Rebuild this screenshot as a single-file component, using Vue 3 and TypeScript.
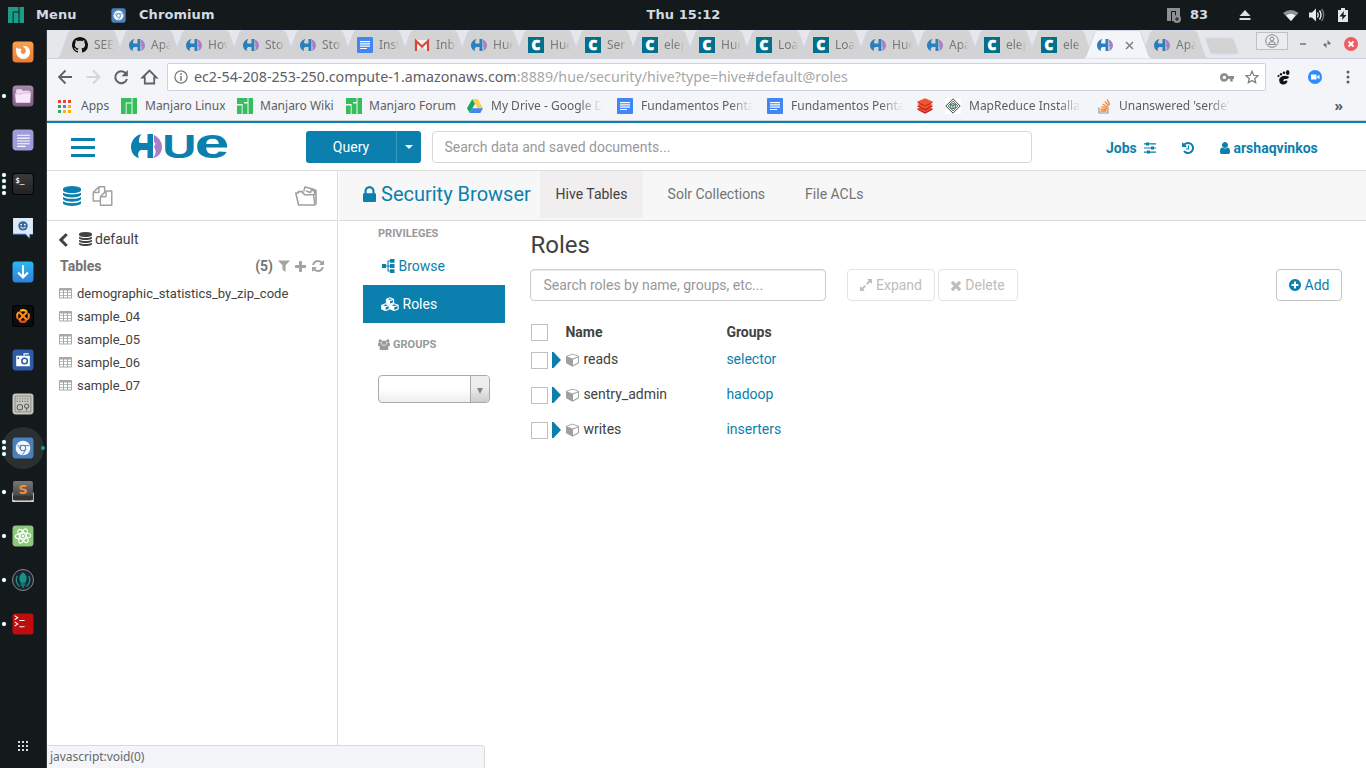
<script setup lang="ts">
interface Tab { icon: string; title: string; active?: boolean }
interface Bookmark { icon: string; title: string; lead: number; width: number; gap: number }
interface DockItem { icon: string; dots: number; active?: boolean }
interface Role { name: string; group: string }

const tabs: Tab[] = [
  { icon: 'github', title: 'SEEK' },
  { icon: 'hue', title: 'Apa' },
  { icon: 'hue', title: 'How' },
  { icon: 'hue', title: 'Sto' },
  { icon: 'hue', title: 'Sto' },
  { icon: 'doc', title: 'Inst' },
  { icon: 'gmail', title: 'Inb' },
  { icon: 'hue', title: 'Hue' },
  { icon: 'cloud', title: 'Hue' },
  { icon: 'cloud', title: 'Ser' },
  { icon: 'cloud', title: 'elep' },
  { icon: 'cloud', title: 'Hue' },
  { icon: 'cloud', title: 'Loa' },
  { icon: 'cloud', title: 'Loa' },
  { icon: 'hue', title: 'Hue' },
  { icon: 'hue', title: 'Apa' },
  { icon: 'cloud', title: 'elep' },
  { icon: 'cloud', title: 'ele' },
  { icon: 'hue', title: '', active: true },
  { icon: 'hue', title: 'Apa' },
]

const bookmarks: Bookmark[] = [
  { icon: 'apps', title: 'Apps', lead: 10, width: 28, gap: 12 },
  { icon: 'manjaro', title: 'Manjaro Linux', lead: 8, width: 80, gap: 12 },
  { icon: 'manjaro2', title: 'Manjaro Wiki', lead: 7, width: 74, gap: 12 },
  { icon: 'manjaro2', title: 'Manjaro Forum', lead: 7, width: 87, gap: 11 },
  { icon: 'drive', title: 'My Drive - Google Dr', lead: 8, width: 111, gap: 15 },
  { icon: 'doc', title: 'Fundamentos Pental', lead: 8, width: 112, gap: 14 },
  { icon: 'doc', title: 'Fundamentos Pental', lead: 8, width: 112, gap: 14 },
  { icon: 'stack', title: '', lead: 8, width: 0, gap: 4 },
  { icon: 'mapred', title: 'MapReduce Installat', lead: 8, width: 112, gap: 16 },
  { icon: 'so', title: "Unanswered 'serde'", lead: 6, width: 112, gap: 12 },
]

const dock: DockItem[] = [
  { icon: 'd-firefox', dots: 0 },
  { icon: 'd-files', dots: 1 },
  { icon: 'd-text', dots: 0 },
  { icon: 'd-term', dots: 4 },
  { icon: 'd-chat', dots: 0 },
  { icon: 'd-down', dots: 0 },
  { icon: 'd-burn', dots: 0 },
  { icon: 'd-camera', dots: 0 },
  { icon: 'd-radio', dots: 0 },
  { icon: 'd-chromium', dots: 3, active: true },
  { icon: 'd-sublime', dots: 1 },
  { icon: 'd-atom', dots: 1 },
  { icon: 'd-kraken', dots: 1 },
  { icon: 'd-xterm', dots: 1 },
]

const tables: string[] = [
  'demographic_statistics_by_zip_code',
  'sample_04',
  'sample_05',
  'sample_06',
  'sample_07',
]

const roles: Role[] = [
  { name: 'reads', group: 'selector' },
  { name: 'sentry_admin', group: 'hadoop' },
  { name: 'writes', group: 'inserters' },
]
</script>

<template>
  <div class="desktop">
    <svg class="sprite" aria-hidden="true">
      <defs>
        <linearGradient id="g-orange" x1="0" y1="0" x2="0" y2="1"><stop offset="0" stop-color="#f9a24d" /><stop offset="1" stop-color="#ee7a35" /></linearGradient>
        <linearGradient id="g-purple" x1="0" y1="0" x2="0" y2="1"><stop offset="0" stop-color="#a78ca9" /><stop offset="1" stop-color="#7d5c85" /></linearGradient>
        <linearGradient id="g-sky" x1="0" y1="0" x2="0" y2="1"><stop offset="0" stop-color="#2cb8ee" /><stop offset="1" stop-color="#2f7fdc" /></linearGradient>
        <linearGradient id="g-dark" x1="0" y1="0" x2="0" y2="1"><stop offset="0" stop-color="#3a3a3a" /><stop offset="1" stop-color="#222" /></linearGradient>
        <linearGradient id="g-grey" x1="0" y1="0" x2="0" y2="1"><stop offset="0" stop-color="#777" /><stop offset="1" stop-color="#3a3a3a" /></linearGradient>
        <linearGradient id="g-burn" x1="0" y1="0" x2="0" y2="1"><stop offset="0" stop-color="#ffc20e" /><stop offset="1" stop-color="#f1471d" /></linearGradient>
      </defs>

      <!-- application glyphs -->
      <symbol id="lock" viewBox="320 128 1152 1408" preserveAspectRatio="none"><path d="M640 768h512v-192q0-106-75-181t-181-75-181 75-75 181v192zm832 96v576q0 40-28 68t-68 28h-960q-40 0-68-28t-28-68v-576q0-40 28-68t68-28h32v-192q0-184 132-316t316-132 316 132 132 316v192h32q40 0 68 28t28 68z" /></symbol>
      <symbol id="db" viewBox="128 0 1536 1792" preserveAspectRatio="none"><path d="M896 768q237 0 443-43t325-127v170q0 69-103 128t-280 93.5-385 34.5-385-34.5-280-93.5-103-128v-170q119 84 325 127t443 43zm0 768q237 0 443-43t325-127v170q0 69-103 128t-280 93.5-385 34.5-385-34.5-280-93.5-103-128v-170q119 84 325 127t443 43zm0-384q237 0 443-43t325-127v170q0 69-103 128t-280 93.5-385 34.5-385-34.5-280-93.5-103-128v-170q119 84 325 127t443 43zm0-1152q208 0 385 34.5t280 93.5 103 128v128q0 69-103 128t-280 93.5-385 34.5-385-34.5-280-93.5-103-128v-128q0-69 103-128t280-93.5 385-34.5z" /></symbol>
      <symbol id="files" viewBox="0 0 1792 1792"><path d="M1696 384q40 0 68 28t28 68v1216q0 40-28 68t-68 28h-960q-40 0-68-28t-28-68v-288h-544q-40 0-68-28t-28-68v-672q0-40 20-88t48-76l408-408q28-28 76-48t88-20h416q40 0 68 28t28 68v328q68-40 128-40h416zm-544 213l-299 299h299v-299zm-640-384l-299 299h299v-299zm196 647l316-316v-416h-384v416q0 40-28 68t-68 28h-416v640h512v-256q0-40 20-88t48-76zm956 804v-1152h-384v416q0 40-28 68t-68 28h-416v640h896z" /></symbol>
      <symbol id="folder" viewBox="0 0 22 20"><g fill="none" stroke="currentColor" stroke-width="1.600" stroke-linejoin="round"><path d="M3.600 19L.8 7h2.500V5.600h4.300V7h.9l.8 1.700h9.200l1.500 10.300z" /><path d="M8.800 5.200L10 .9l7.500 2.200 3.500 1.500v13.800M11 5l4.500 1.400 1-3 3 2.300v3.500" /></g></symbol>
      <symbol id="chev" viewBox="300 0 1192 1792"><path d="M1427 301l-531 531 531 531q19 19 19 45t-19 45l-166 166q-19 19-45 19t-45-19l-742-742q-19-19-19-45t19-45l742-742q19-19 45-19t45 19l166 166q19 19 19 45t-19 45z" /></symbol>
      <symbol id="filter" viewBox="190 200 1412 1500"><path d="M1595 295q17 41-14 70l-493 493v742q0 42-39 59-13 5-25 5-27 0-45-19l-256-256q-19-19-19-45v-486l-493-493q-31-29-14-70 17-39 59-39h1280q42 0 59 39z" /></symbol>
      <symbol id="plus" viewBox="192 128 1408 1408"><path d="M1600 736v192q0 40-28 68t-68 28h-416v416q0 40-28 68t-68 28h-192q-40 0-68-28t-28-68v-416h-416q-40 0-68-28t-28-68v-192q0-40 28-68t68-28h416v-416q0-40 28-68t68-28h192q40 0 68 28t28 68v416h416q40 0 68 28t28 68z" /></symbol>
      <symbol id="refresh" viewBox="128 128 1536 1536"><path d="M1639 1056q0 5-1 7-64 268-268 434.500t-478 166.500q-146 0-282.500-55t-243.500-157l-129 129q-19 19-45 19t-45-19-19-45v-448q0-26 19-45t45-19h448q26 0 45 19t19 45-19 45l-137 137q71 66 161 102t187 36q134 0 250-65t186-179q11-17 53-117 8-23 30-23h192q13 0 22.500 9.500t9.500 22.500zm25-800v448q0 26-19 45t-45 19h-448q-26 0-45-19t-19-45 19-45l138-138q-148-137-349-137-134 0-250 65t-186 179q-11 17-53 117-8 23-30 23h-199q-13 0-22.500-9.500t-9.500-22.500v-7q65-268 270-434.500t480-166.500q146 0 284 55.500t245 156.500l130-129q19-19 45-19t45 19 19 45z" /></symbol>
      <symbol id="user" viewBox="256 128 1280 1536"><path d="M1536 1399q0 109-62.500 187t-150.500 78h-854q-88 0-150.500-78t-62.500-187q0-85 8.500-160.500t31.500-152 58.500-131 94-89 134.500-34.500q131 128 313 128t313-128q76 0 134.500 34.500t94 89 58.500 131 31.500 152 8.500 160.500zm-256-887q0 159-112.500 271.500t-271.500 112.500-271.500-112.500-112.500-271.500 112.500-271.500 271.500-112.500 271.500 112.500 112.500 271.500z" /></symbol>
      <symbol id="history" viewBox="128 128 1536 1536"><path d="M1664 896q0 156-61 298t-164 245-245 164-298 61q-172 0-327-72.500t-264-204.500q-7-10-6.500-22.500t8.500-20.500l137-138q10-9 25-9 16 2 23 12 73 95 179 147t225 52q104 0 198.500-40.500t163.500-109.500 109.500-163.500 40.500-198.500-40.500-198.500-109.500-163.500-163.500-109.500-198.500-40.500q-98 0-188 35.500t-160 101.500l137 138q31 30 14 69-17 40-59 40h-448q-26 0-45-19t-19-45v-448q0-42 40-59 39-17 69 14l130 129q107-101 244.500-156.500t284.500-55.500q156 0 298 61t245 164 164 245 61 298zm-640-288v448q0 14-9 23t-23 9h-320q-14 0-23-9t-9-23v-64q0-14 9-23t23-9h224v-352q0-14 9-23t23-9h64q14 0 23 9t9 23z" /></symbol>
      <symbol id="sliders" viewBox="0 0 12 12"><path d="M0 1.300h12v1.200H0zM0 5.400h12v1.200H0zM0 9.500h12v1.200H0zM2 .4h3v3H2zM7 4.500h3v3H7zM3 8.600h3v3H3z" /></symbol>
      <symbol id="pluscircle" viewBox="128 128 1536 1536"><path d="M1344 960v-128q0-26-19-45t-45-19h-256v-256q0-26-19-45t-45-19h-128q-26 0-45 19t-19 45v256h-256q-26 0-45 19t-19 45v128q0 26 19 45t45 19h256v256q0 26 19 45t45 19h128q26 0 45-19t19-45v-256h256q26 0 45-19t19-45zm320-64q0 209-103 385.500t-279.500 279.500-385.500 103-385.500-103-279.500-279.500-103-385.500 103-385.500 279.500-279.500 385.500-103 385.500 103 279.500 279.500 103 385.500z" /></symbol>
      <symbol id="times" viewBox="302 366 1188 1188"><path d="M1490 1322q0 40-28 68l-136 136q-28 28-68 28t-68-28l-294-294-294 294q-28 28-68 28t-68-28l-136-136q-28-28-28-68t28-68l294-294-294-294q-28-28-28-68t28-68l136-136q28-28 68-28t68 28l294 294 294-294q28-28 68-28t68 28l136 136q28 28 28 68t-28 68l-294 294 294 294q28 28 28 68z" /></symbol>
      <symbol id="expand" viewBox="128 128 1536 1536"><path d="M883 1056q0 13-10 23l-332 332 144 144q19 19 19 45t-19 45-45 19h-448q-26 0-45-19t-19-45v-448q0-26 19-45t45-19 45 19l144 144 332-332q10-10 23-10t23 10l114 114q10 10 10 23zm781-864v448q0 26-19 45t-45 19-45-19l-144-144-332 332q-10 10-23 10t-23-10l-114-114q-10-10-10-23t10-23l332-332-144-144q-19-19-19-45t19-45 45-19h448q26 0 45 19t19 45z" /></symbol>
      <symbol id="cube" viewBox="0 100 1664 1700"><path d="M896 1629l640-349v-636l-640 233v752zm-64-865l698-254-698-254-698 254zm832-252v768q0 35-18 65t-49 47l-704 384q-28 16-61 16t-61-16l-704-384q-31-17-49-47t-18-65v-768q0-40 23-73t61-47l704-256q22-8 44-8t44 8l704 256q38 14 61 47t23 73z" /></symbol>
      <symbol id="cubes" viewBox="0 0 18 14"><g fill="none" stroke="currentColor" stroke-width="1.200" stroke-linejoin="round"><path d="M9 .8l3.500 1.400v3.600L9 7.200 5.500 5.800V2.200zM5.500 2.200L9 3.600l3.500-1.400M4.600 6.800l3.700 1.500v3.700l-3.700 1.500L.8 12V8.300zM.8 8.300l3.800 1.400 3.700-1.400M13.200 6.800l3.900 1.500v3.700l-3.900 1.500-3.700-1.500V8.300zM9.500 8.300l3.700 1.400 3.900-1.400" /></g><path d="M5.500 2.200L9 3.600v3.600L5.500 5.800zM.8 8.300l3.800 1.400v3.800L.8 12zM9.500 8.300l3.700 1.400v3.800L9.500 12z" /></symbol>
      <symbol id="sitemap" viewBox="0 0 13 14"><path d="M0 5h4v4H0zM8 0h4.500v3.800H8zM8 5h4.500v4H8zM8 10.200h4.500V14H8zM4 6.400h4v1.200H4zM5.500 1.400H8v1.200H6.600v8.800H8v1.200H5.500z" /></symbol>
      <symbol id="group" viewBox="0 0 12 11"><circle cx="6" cy="3.700" r="2.300" /><circle cx="2.200" cy="2" r="1.700" /><circle cx="9.800" cy="2" r="1.700" /><path d="M1.600 10q0-4 2.400-4.200Q6 7.500 8 5.800q2.400.2 2.400 4.200 0 1-1 1H2.600q-1 0-1-1zM0 6q0-2.400 1.200-2.400 1 .7 2 .3 0 1 .6 1.700Q2.500 6 2 7.300H1Q0 7.300 0 6zM12 6q0-2.400-1.200-2.400-1 .7-2 .3 0 1-.6 1.700 1.300.4 1.800 1.700h1q1 0 1-1.300z" /></symbol>
      <symbol id="table" viewBox="0 0 13 11"><path d="M1 0h11q1 0 1 1v8.500q0 1-1 1H1q-1 0-1-1V1q0-1 1-1zm0 2.500v1.800h3V2.500zm4 0v1.800h3V2.500zm4 0v1.800h3V2.500zM1 5.100v1.800h3V5.100zm4 0v1.800h3V5.100zm4 0v1.800h3V5.100zM1 7.700v1.800h3V7.700zm4 0v1.800h3V7.700zm4 0v1.800h3V7.700z" fill-rule="evenodd" /></symbol>

      <!-- tab and bookmark icons -->
      <symbol id="hue" viewBox="0 0 31 24" preserveAspectRatio="none"><path d="M10.500 0C4 1.500 0 7 0 13c0 5 3 10 8 11-1.500-3-1-7 2-8h6.500v8H22V0h-5.500v9H9C7 8 8 3 10.500 0z" /><path d="M23 1c5 2.500 8 7 8 12 0 6-4 10-9 11 3-4 3.500-7 1-11l1.500-3.500L23 8z" fill="#a77fc9" /></symbol>
      <symbol id="github" viewBox="0 0 16 16"><path fill="#111" d="M8 0C3.580 0 0 3.580 0 8c0 3.540 2.290 6.530 5.470 7.590.4.070.55-.17.55-.38 0-.19-.01-.82-.01-1.490-2.010.37-2.530-.49-2.690-.94-.09-.23-.48-.94-.82-1.130-.28-.15-.68-.52-.01-.53.63-.01 1.080.58 1.230.82.72 1.210 1.870.87 2.330.66.070-.52.28-.87.51-1.070-1.780-.2-3.640-.89-3.640-3.950 0-.87.31-1.590.82-2.150-.08-.2-.36-1.020.08-2.120 0 0 .67-.21 2.200.82.64-.18 1.320-.27 2-.27s1.360.09 2 .27c1.530-1.040 2.200-.82 2.200-.82.44 1.100.16 1.920.08 2.120.51.56.82 1.270.82 2.150 0 3.070-1.870 3.750-3.650 3.950.29.25.54.73.54 1.480 0 1.070-.01 1.930-.01 2.200 0 .21.15.46.55.38A8.010 8.010 0 0 0 16 8c0-4.420-3.580-8-8-8" /></symbol>
      <symbol id="doc" viewBox="0 0 16 16"><rect width="16" height="16" rx="1" fill="#4285f4" /><path fill="#fff" d="M3 4h10v1.200H3zM3 6.300h10v1.200H3zM3 8.600h10v1.200H3zM3 10.900h7v1.200H3z" /></symbol>
      <symbol id="gmail" viewBox="0 0 16 16"><path fill="#f4f4f4" d="M1 3h14v11H1z" /><path fill="#d8d8d8" d="M3 14l5-5 5 5z" /><path fill="none" stroke="#d8453a" stroke-width="2.200" d="M2 14V4l6 5.500L14 4v10" /></symbol>
      <symbol id="cloud" viewBox="0 0 16 16"><rect width="16" height="16" fill="#02708c" /></symbol>
      <symbol id="apps" viewBox="0 0 13 13"><path fill="#ea4335" d="M0 0h3v3H0zM5 0h3v3H5zM10 0h3v3h-3z" /><path fill="#34a853" d="M0 5h3v3H0zM0 10h3v3H0z" /><path fill="#4285f4" d="M5 5h3v3H5z" /><path fill="#fbaf00" d="M10 5h3v3h-3zM5 10h3v3H5zM10 10h3v3h-3z" /></symbol>
      <symbol id="manjaro" viewBox="0 0 16 16"><path d="M0 0h10.500v4.500H4.700V16H0zM5.600 5.500h4.900V16H5.600zM11.500 0H16v16h-4.500z" /></symbol>
      <symbol id="manjaro2" viewBox="0 0 16 16"><path d="M0 0h10.500v4H7v2H0zM0 7.500h4.700V16H0zM5.600 5.500h4.900V16H5.600zM11.500 0H16v16h-4.500z" /></symbol>
      <symbol id="drive" viewBox="0 0 16 14"><path fill="#11a861" d="M5.300 0L8 4.700 2.700 14 0 9.300z" /><path fill="#ffcf48" d="M5.300 0h5.400L16 9.300h-5.400z" /><path fill="#4285f4" d="M5.400 9.300H16L13.300 14H2.700z" /></symbol>
      <symbol id="stack" viewBox="0 0 16 16"><path fill="#b91f1a" d="M0 11.500L8 8l8 3.500-8 4.200z" /><path fill="#ee4a30" d="M0 10.500L8 7l8 3.500-8 4z" /><path fill="#b91f1a" d="M0 8.300l8-3.500 8 3.500-8 4z" /><path fill="#f15335" d="M0 7l8-3.500L16 7l-8 4z" /><path fill="#b91f1a" d="M0 4.700L8 1l8 3.700-8 3.500z" /><path fill="#f15335" d="M0 3.700L8 .2l8 3.500-8 3.800z" /></symbol>
      <symbol id="mapred" viewBox="0 0 16 16"><path fill="#fff" d="M0 0h16v16H0z" /><path d="M8 .8L15.200 8 8 15.200.8 8z" fill="none" stroke="#444" /><path d="M8 3l5 5-5 5-5-5z" fill="#dcebe3" stroke="#555" stroke-width=".8" /><path d="M5.500 6.500L8 5.500l2.500 1v3L8 11 5.500 9.500zM8 7.500V11M5.500 6.500l2.500 1 2.500-1" fill="none" stroke="#26734c" stroke-width=".9" /></symbol>
      <symbol id="so" viewBox="0 0 16 16"><path d="M2 9.500v5.500h9V9.500" fill="none" stroke="#999" stroke-width="1.200" /><g stroke="#f48024" stroke-width="1.300"><path d="M3.500 13h6M3.600 10.900l6 .8M4.300 8.500l5.700 2M5.700 6l5 3.400M7.800 3.400l4 4.600M10.300 1.500l2.400 5.300" /></g></symbol>

      <!-- dock icons -->
      <symbol id="d-firefox" viewBox="0 0 21 21"><rect x=".5" y=".5" width="20" height="20" rx="3.500" fill="url(#g-orange)" /><path fill="#fff" d="M4 6q1 1.300 2.500 1.200Q8 7 9.300 8 8 9.300 8.500 11q1.200 2 3.500 1 2-1.600.8-4.300-.6-1.500-2.600-2.200 2-1.500 4.300-.2 3.400 2.700 2.500 7-1.600 4.800-6.300 5-5.200-.4-6.600-5.500Q3.600 8.500 4 6z" /></symbol>
      <symbol id="d-files" viewBox="0 0 21 21"><rect x=".5" y=".5" width="20" height="20" rx="3.500" fill="url(#g-purple)" /><path fill="#f2d9f3" d="M4 4h5l1.200 1.500H17v5H4z" /><path fill="#f9e7fa" d="M3 8h6l1.200-1H18l-.6 10H3.600z" /><path d="M3.400 8.500h6l1-1h7" stroke="#b99bbd" stroke-width=".6" fill="none" /></symbol>
      <symbol id="d-text" viewBox="0 0 21 21"><rect x=".5" y=".5" width="20" height="20" rx="3.500" fill="#a09bd9" /><path fill="#fff" d="M5 5.500h12v1H5zM5 8.200h12v1H5zM5 10.900h12v1H5zM5 13.600h12v1H5zM5 16.100h8v1H5z" /></symbol>
      <symbol id="d-term" viewBox="0 0 21 21"><rect x=".5" y=".5" width="20" height="20" rx="3" fill="url(#g-dark)" stroke="#050505" /></symbol>
      <symbol id="d-chat" viewBox="0 0 21 21"><path fill="#dfeaf8" d="M1 1h19v15.500h-3v4l-4-4H1z" /><path fill="#2d64a8" d="M0 16h13l3.500 4v-3.500h3v1H17V21l-4.500-4H1z" /><circle cx="10.500" cy="8.500" r="4.500" fill="#33689f" /><path d="M8 9.500q2.500 2.500 5 0" fill="none" stroke="#dce8f6" /><circle cx="8.800" cy="7.200" r=".8" fill="#fff" /><circle cx="12.200" cy="7.200" r=".8" fill="#fff" /></symbol>
      <symbol id="d-down" viewBox="0 0 21 21"><rect x=".5" y=".5" width="20" height="20" rx="3" fill="url(#g-sky)" /><path d="M10.500 4v11M5.800 11l4.700 4.700L15.200 11" fill="none" stroke="#fff" stroke-width="2" /></symbol>
      <symbol id="d-burn" viewBox="0 0 21 21"><rect x=".5" y=".5" width="20" height="20" rx="3" fill="#0c0c0c" stroke="#000" /><circle cx="10.500" cy="10.500" r="5.600" fill="none" stroke="url(#g-burn)" stroke-width="2" stroke-dasharray="7 1.800" stroke-dashoffset="3.500" /><path d="M6.500 6.500l8 8M14.500 6.500l-8 8" stroke="#fb8b18" stroke-width="2.200" /></symbol>
      <symbol id="d-camera" viewBox="0 0 21 21"><rect x=".5" y=".5" width="20" height="20" rx="3" fill="#2d5da6" /><path fill="#fff" d="M4 6.500h7V4h5v1.200h-4V6.500h5v10H4z" /><circle cx="12" cy="11.500" r="3.400" fill="#2d5da6" /><circle cx="12" cy="11.500" r="1.900" fill="#fff" /><path d="M5.200 8h1.600v1.600H5.200z" fill="#2d5da6" /></symbol>
      <symbol id="d-radio" viewBox="0 0 21 21"><rect x=".5" y=".5" width="20" height="20" rx="3" fill="#c8c7bf" /><rect x="3" y="3" width="15" height="15" fill="none" stroke="#92928a" /><path d="M4.500 5.500h12M4.500 8h12" stroke="#66665f" stroke-width="1" stroke-dasharray="1 1.500" /><circle cx="7.500" cy="13.500" r="2.600" fill="none" stroke="#66665f" /><circle cx="14" cy="12.500" r="2" fill="none" stroke="#66665f" /><path d="M14 14v3" stroke="#66665f" /></symbol>
      <symbol id="d-chromium" viewBox="0 0 21 21"><rect x=".5" y=".5" width="20" height="20" rx="3" fill="#4b80bb" /><circle cx="10.500" cy="10.500" r="7" fill="#f3f6fb" /><path d="M7.500 8.200h9M10 17l3.500-5.500M5.500 7.500l3 5" fill="none" stroke="#4b80bb" stroke-width=".9" /><circle cx="10.500" cy="10.500" r="3" fill="#4b80bb" /><circle cx="10.500" cy="10.500" r="2.100" fill="#f3f6fb" /></symbol>
      <symbol id="d-sublime" viewBox="0 0 21 21"><path d="M.2 11v9h20.600v-9z" fill="#ddd" /><rect x="1" y="0" width="19" height="18.500" rx="2" fill="url(#g-grey)" /><path d="M1 14h19v4H1z" fill="#333" /></symbol>
      <symbol id="d-atom" viewBox="0 0 21 21"><rect x=".5" y=".5" width="20" height="20" rx="3" fill="#8cc97c" /><g fill="none" stroke="#fff" stroke-width="1.100"><ellipse cx="10.500" cy="10.500" rx="2.700" ry="7.300" transform="rotate(25 10.500 10.500)" /><ellipse cx="10.500" cy="10.500" rx="2.700" ry="7.300" transform="rotate(-35 10.500 10.500)" /><ellipse cx="10.500" cy="10.500" rx="2.700" ry="7.300" transform="rotate(85 10.500 10.500)" /></g><circle cx="10.500" cy="10.500" r="1.200" fill="#fff" /></symbol>
      <symbol id="d-kraken" viewBox="0 0 21 21"><circle cx="10.500" cy="10.500" r="10" fill="#1a2431" stroke="#8b8f94" stroke-width=".9" /><path fill="#179287" d="M10.500 3q4.500 3 3.300 8l-1 2v3.500h-.9V13h-.7v5h-1.400v-5h-.7v3.500h-.9V13l-1-2Q6 6 10.500 3z" /><path d="M5 6.500Q2.500 12 7 16.800M16 6.500q2.500 5.500-2 10.300" fill="none" stroke="#179287" stroke-width="1.300" /></symbol>
      <symbol id="d-xterm" viewBox="0 0 21 21"><rect x=".5" y=".5" width="20" height="20" rx="2.500" fill="#bd0d0d" /><path d="M2.500 2.500L5.500 4.500 2.500 6.500M2.500 8.500l3 2-3 2" fill="none" stroke="#fff" /><path d="M7 7.200h5M7 13.200h5" stroke="#fff" /></symbol>
    </svg>

    <header class="topbar">
      <div class="top-left">
        <svg class="ic teal top-manjaro"><use href="#manjaro" /></svg>
        <span class="top-menu">Menu</span>
        <svg class="ic top-chromium"><use href="#d-chromium" /></svg>
        <span class="top-app">Chromium</span>
      </div>
      <span class="clock">Thu 15:12</span>
      <svg class="top-tray" viewBox="0 0 196 30">
        <g fill="#8f9090"><path d="M1 8h9v3H5v10H1zM6 12h3v9H6zM10 8h4v8h-4z" /><circle cx="11" cy="19" r="4" /></g><path d="M9 19h4M11 17v4" stroke="#14191c" />
        <text x="24" y="19" font-family="DejaVu Sans, sans-serif" font-size="13" font-weight="700" fill="#d3dbe0">83</text>
        <g fill="#dbe1e3"><path d="M79 10l5.500 6h-11zM73.500 18h11v2h-11z" /></g>
        <path d="M117 13q8-6 15.500 0L125 21z" fill="#8d9396" /><path d="M120 15.500q5-3.500 9.500 0L125 21z" fill="#eef2f3" />
        <path d="M143 12.500h3l4-4v13l-4-4h-3z" fill="#e6ebed" /><g fill="none" stroke-width="1.400"><path d="M151.500 12.500q1.500 2.500 0 5M153.500 10.500q3 4.500 0 9" stroke="#e6ebed" /><path d="M155.700 9q4 6 0 12" stroke="#6d7476" /></g>
        <path d="M172 10h3V8h4v2h3v12h-10z" fill="#e1e7e9" /><path d="M178 11l-4.500 5.500h3L176 20l4.500-5h-3z" fill="#14191c" />
      </svg>
    </header>

    <div class="body">
      <nav class="dock">
        <div v-for="item in dock" :key="item.icon" class="dock-item" :class="{ active: item.active }">
          <div class="dots"><i v-for="n in item.dots" :key="n" /></div>
          <svg class="dock-icon" viewBox="0 0 21 21">
            <use :href="'#' + item.icon" />
            <text v-if="item.icon === 'd-term'" x="3" y="9.500" class="term-text">$_</text>
            <text v-if="item.icon === 'd-sublime'" x="10.500" y="12" class="sub-text">S</text>
          </svg>
          <i v-if="item.active" class="now" />
        </div>
        <div class="launcher"><i v-for="n in 9" :key="n" /></div>
      </nav>

      <section class="browser">
        <div class="strip">
          <div v-for="(tab, i) in tabs" :key="i" class="tab" :class="{ current: tab.active }">
            <svg class="tab-bg" viewBox="0 0 69 29"><path class="tab-fill" d="M0 28.500C2 28 2.500 27 3.500 25L11.500 3Q12.500.5 15 .5H54Q57 .5 58 3L65.500 25C66.500 27 67 28 69 28.500" /></svg>
            <svg class="fav" :class="'fav-' + tab.icon">
              <use :href="'#' + tab.icon" />
              <text v-if="tab.icon === 'cloud'" x="8" y="12.900" class="cloud-text">C</text>
            </svg>
            <span v-if="!tab.active" class="tab-title">{{ tab.title }}</span>
            <svg v-else class="tab-close" viewBox="0 0 9 9"><path d="M1 1l7 7M8 1L1 8" stroke="#7c8085" stroke-width="1.500" /></svg>
          </div>
          <svg class="newtab" viewBox="0 0 36 18"><path d="M3 1h22q4 0 5 2.500l4 11q.7 2.500-2 2.500H10q-3 0-4-2.500l-4-11Q1 1 3 1z" fill="#d2d2d3" stroke="#d9dbe8" /></svg>
          <div class="win">
            <div class="profile"><svg viewBox="0 0 14 14"><g fill="none" stroke="#86888c"><circle cx="7" cy="7" r="6.300" /><circle cx="7" cy="5" r="1.900" /><path d="M3.500 10.500q0-2.800 3.500-2.800t3.500 2.800z" /></g></svg></div>
            <svg class="win-min" viewBox="0 0 6 2"><path d="M0 0h6v2H0z" fill="#8f9299" /></svg>
            <svg class="win-max" viewBox="0 0 8 8"><path d="M4.500 0v3.500H8L6.500 4.500H4.500zM3.500 8V4.500H0l1.500-1h2zM4.500 0l1.800 1.700L8 3.500H4.500zM3.500 8L1.700 6.300 0 4.500h3.500z" fill="#6f737e" /></svg>
            <svg class="win-close" viewBox="0 0 14 14"><circle cx="7" cy="7" r="7" fill="#f15a60" /><path d="M4.500 4.500l5 5M9.500 4.500l-5 5" stroke="#fff" stroke-width="2" /></svg>
          </div>
        </div>

        <div class="toolbar">
          <svg class="navs" viewBox="0 0 104 16">
            <path d="M14 8H1.500M7.500 1.500L1 8l6.500 6.500" fill="none" stroke="#5d6168" stroke-width="1.900" />
            <path d="M28.500 8H41M35 1.500L41.500 8 35 14.500" fill="none" stroke="#d3d5d8" stroke-width="1.900" />
            <path d="M68 4.500A6 6 0 1 0 69 10" fill="none" stroke="#5d6168" stroke-width="2" /><path d="M69.800 1v6.300h-6.300z" fill="#5d6168" />
            <path d="M84.500 8.500L91.500 1.500l7 7h-2.300v6h-9.400v-6z" fill="none" stroke="#5d6168" stroke-width="1.800" />
          </svg>
          <div class="omnibox">
            <svg class="info" viewBox="0 0 14 14"><circle cx="7" cy="7" r="6.100" fill="none" stroke="#797c80" stroke-width="1.300" /><path d="M6.200 3.300h1.600v1.600H6.200zM6.200 6h1.600v4.800H6.200z" fill="#797c80" /></svg>
            <span class="url"><b>ec2-54-208-253-250.compute-1.amazonaws.com</b>:8889/hue/security/hive?type=hive#default@roles</span>
            <svg class="key" viewBox="0 0 14 9"><path fill-rule="evenodd" d="M4.300 0Q7.300.2 8.300 3H14v3h-1.300v2.500h-2.500V6H8.300Q7.200 8.600 4.300 8.700 0 8.400 0 4.400 0 .4 4.300 0zm0 2.700a1.700 1.700 0 1 0 .1 0z" fill="#898c90" /></svg>
            <svg class="star" viewBox="0 0 14 14"><path d="M7 1.300l1.700 4 4.300.4-3.300 2.800 1 4.200L7 10.500l-3.700 2.200 1-4.200L1 5.700l4.300-.4z" fill="none" stroke="#76797f" stroke-width="1.200" /></svg>
          </div>
          <svg class="foot" viewBox="0 0 13 15"><ellipse cx="10.700" cy="2.500" rx="1.800" ry="2.500" fill="#111" /><circle cx="7" cy="2.800" r="1.300" fill="#111" /><circle cx="4" cy="4.200" r="1.200" fill="#111" /><circle cx="1.500" cy="6" r="1.100" fill="#111" /><path d="M11.700 6.500Q6 4.500 2.700 8 1 12 4.500 14.300q4.500 1 6-2.500-.3-2-2.300-1-.8 1-1.700.2-.5-1.500 1.500-2 4.500-.2 3.700-2.500z" fill="#111" /></svg>
          <svg class="zoomapp" viewBox="0 0 14 14"><circle cx="7" cy="7" r="7" fill="#2d8cff" /><path d="M3 4.500h5.500v5H3zM9 6.500l2.500-1.700v4.400L9 7.500z" fill="#fff" /></svg>
          <svg class="more" viewBox="0 0 4 14"><g fill="#5a5e66"><circle cx="2" cy="2" r="1.500" /><circle cx="2" cy="7" r="1.500" /><circle cx="2" cy="12" r="1.500" /></g></svg>
        </div>

        <div class="bookmarks">
          <div v-for="(b, i) in bookmarks" :key="i" class="bm">
            <svg class="bm-icon" :class="'bm-' + b.icon" :style="{ marginRight: b.lead + 'px' }"><use :href="'#' + b.icon" /></svg>
            <span v-if="b.title" class="bm-title" :class="{ fade: b.width > 100 }" :style="{ width: b.width + 'px' }">{{ b.title }}</span>
            <span class="bm-gap" :style="{ width: b.gap + 'px' }" />
          </div>
          <span class="overflow">»</span>
        </div>

        <div class="hue-header">
          <div class="burger"><i /><i /><i /></div>
          <svg class="logo" viewBox="0 0 97 25">
            <use href="#hue" width="31" height="24" />
            <g font-family="Liberation Sans, sans-serif" font-weight="700" fill="#0b7fad">
              <text x="0" y="0" font-size="33.500" transform="translate(31.200 23.800) scale(1.410 1)">U</text>
              <text x="0" y="0" font-size="42" transform="translate(63.800 23.600) scale(1.480 1)">e</text>
            </g>
          </svg>
          <div class="query"><span>Query</span><i class="caret-cell"><i class="caret" /></i></div>
          <div class="gsearch">Search data and saved documents...</div>
          <div class="hue-right">
            <span class="jobs">Jobs</span>
            <svg class="ic i-sliders"><use href="#sliders" /></svg>
            <svg class="ic i-history"><use href="#history" /></svg>
            <svg class="ic i-user"><use href="#user" /></svg>
            <span>arshaqvinkos</span>
          </div>
        </div>

        <div class="hue-body">
          <aside class="assist">
            <div class="assist-tabs">
              <svg class="ic a-db"><use href="#db" /></svg>
              <svg class="ic a-files"><use href="#files" /></svg>
              <svg class="ic a-folder"><use href="#folder" /></svg>
            </div>
            <div class="crumb">
              <svg class="ic c-chev"><use href="#chev" /></svg>
              <svg class="ic c-db"><use href="#db" /></svg>
              <span>default</span>
            </div>
            <div class="tables-head">
              <b>Tables</b>
              <b class="count">(5)</b>
              <svg class="ic t-filter"><use href="#filter" /></svg>
              <svg class="ic t-plus"><use href="#plus" /></svg>
              <svg class="ic t-refresh"><use href="#refresh" /></svg>
            </div>
            <ul class="tables">
              <li v-for="t in tables" :key="t"><svg class="ic t-table"><use href="#table" /></svg>{{ t }}</li>
            </ul>
          </aside>

          <main class="main">
            <div class="sec-bar">
              <svg class="ic s-lock"><use href="#lock" /></svg>
              <span class="sec-title">Security Browser</span>
              <span class="sec-tab on">Hive Tables</span>
              <span class="sec-tab">Solr Collections</span>
              <span class="sec-tab acl">File ACLs</span>
            </div>
            <div class="sec-body">
              <div class="side">
                <div class="side-head">PRIVILEGES</div>
                <div class="side-item"><svg class="ic p-site"><use href="#sitemap" /></svg>Browse</div>
                <div class="side-item sel"><svg class="ic p-cubes"><use href="#cubes" /></svg>Roles</div>
                <div class="side-head groups"><svg class="ic p-group"><use href="#group" /></svg>GROUPS</div>
                <div class="select"><i class="drop"><i /></i></div>
              </div>
              <div class="content">
                <h1>Roles</h1>
                <div class="actions">
                  <div class="rsearch">Search roles by name, groups, etc...</div>
                  <div class="btn off b-exp"><svg class="ic b-i12"><use href="#expand" /></svg>Expand</div>
                  <div class="btn off b-del"><svg class="ic b-i10"><use href="#times" /></svg>Delete</div>
                  <div class="btn b-add"><svg class="ic b-i12"><use href="#pluscircle" /></svg>Add</div>
                </div>
                <div class="row head"><i class="box" /><b class="name">Name</b><b>Groups</b></div>
                <div v-for="r in roles" :key="r.name" class="row">
                  <i class="box" />
                  <svg class="tri" viewBox="0 0 9 16"><path d="M0 0h1.500L9 8l-7.500 8H0z" /></svg>
                  <svg class="ic r-cube"><use href="#cube" /></svg>
                  <span class="name">{{ r.name }}</span>
                  <a>{{ r.group }}</a>
                </div>
              </div>
            </div>
          </main>
        </div>
        <div class="status">javascript:void(0)</div>
      </section>
    </div>
  </div>
</template>

<style>
body { margin: 0; overflow: hidden; }
</style>

<style scoped>
.desktop { width: 1366px; height: 768px; display: flex; flex-direction: column; background: #14191c; font-family: Roboto, sans-serif; font-size: 14px; color: #424242; overflow: hidden; position: relative; white-space: nowrap; }
.desktop * { box-sizing: border-box; }
.sprite { position: absolute; width: 0; height: 0; }
svg { flex: none; display: block; }
.ic { fill: currentColor; }
i { display: block; font-style: normal; }

.topbar { height: 30px; display: grid; grid-template-columns: 1fr auto 1fr; align-items: center; font: 700 13px "DejaVu Sans", sans-serif; color: #d3dbe0; flex: none; }
.top-left { display: flex; align-items: center; padding-left: 8px; }
.teal { color: #1b9e85; }
.top-manjaro { width: 16px; height: 16px; margin-right: 12px; }
.top-menu, .top-app, .clock { line-height: 29px; height: 30px; letter-spacing: .08px; }
.clock { padding-left: 1px; }
.top-menu { width: 75px; }
.top-chromium { width: 15px; height: 15px; margin-right: 13px; }
.top-tray { width: 196px; height: 30px; justify-self: end; margin-right: 4px; }

.body { flex: 1; display: flex; min-height: 0; }
.dock { width: 47px; border-right: 1px solid #34383b; display: flex; flex-direction: column; flex: none; }
.dock-item { height: 44px; display: flex; align-items: center; position: relative; flex: none; }
.dock-item.active::before { content: ""; position: absolute; left: 2px; top: 1px; width: 42px; height: 42px; border-radius: 50%; background: #2a2f32; }
.dots { width: 12px; padding-left: 2px; display: flex; flex-direction: column; gap: 2px; position: relative; }
.dots i { width: 4px; height: 4px; border-radius: 50%; background: #fff; box-shadow: 0 0 1px #1abc9c; }
.dock-icon { width: 22px; height: 22px; position: relative; }
.term-text { font: 700 7.5px "DejaVu Sans Mono", monospace; fill: #eee; }
.sub-text { font: 700 12px "DejaVu Sans", sans-serif; fill: #f3913a; text-anchor: middle; }
.now { position: absolute; left: 41px; top: 20px; width: 4px; height: 4px; border-radius: 50%; background: #1aa583; }
.launcher { margin: auto 0 17px 18px; display: grid; grid-template-columns: repeat(3, 2px); gap: 2px; }
.launcher i { width: 2px; height: 2px; background: #d6dadb; }

.browser { flex: 1; min-width: 0; background: #fff; display: flex; flex-direction: column; position: relative; }
.strip { height: 29px; background: #e6e7ea; display: flex; padding-left: 10px; position: relative; box-shadow: inset 0 -1px #ccd1e5; flex: none; }
.tab { width: 69px; height: 29px; margin-right: -12px; display: flex; padding: 7px 0 0 15px; position: relative; flex: none; }
.tab-bg { position: absolute; left: 0; top: 0; width: 69px; height: 29px; }
.tab-fill { fill: #d3d3d3; stroke: #cfd4e8; stroke-width: 1; }
.tab.current { z-index: 2; margin-right: -13px; padding-left: 14px; }
.current .tab-fill { fill: #f4f5f8; }
.fav { width: 16px; height: 16px; position: relative; }
.fav-hue { height: 12px; margin-top: 2px; fill: #2b7fbd; }
.cloud-text { font: 800 13.5px "Open Sans", sans-serif; fill: #fff; stroke: #fff; stroke-width: .6; text-anchor: middle; }
.tab-title { width: 20px; overflow: hidden; margin-left: 6px; font: 12px/16px "Noto Sans", sans-serif; color: #77797d; position: relative; height: 18px; -webkit-mask-image: linear-gradient(90deg, #000 60%, transparent); mask-image: linear-gradient(90deg, #000 60%, transparent); }
.tab-close { width: 9px; height: 9px; margin: 4px 0 0 12px; position: relative; }
.newtab { width: 36px; height: 18px; margin: 7px 0 0 8px; }
.win { margin-left: auto; display: flex; align-items: center; padding-right: 8px; height: 27px; }
.profile { width: 32px; height: 18px; margin: -5px 12px 0 0; border: 1px solid #bfc1c5; display: flex; justify-content: center; align-items: center; background: #ebecee; }
.profile svg { width: 14px; height: 14px; }
.win-min { width: 6px; height: 2px; margin-right: 17px; }
.win-max { width: 8px; height: 8px; margin-right: 13px; }
.win-close { width: 14px; height: 14px; }

.toolbar { height: 33px; background: #f4f5f8; display: flex; align-items: center; padding-left: 11px; flex: none; padding-top: 3px; }
.navs { width: 104px; height: 16px; margin-right: 5px; }
.omnibox { width: 1099px; height: 28px; border: 1px solid #ccd1e6; border-radius: 2px; background: #fff; display: flex; align-items: center; padding: 0 6px; }
.info { width: 14px; height: 14px; margin-right: 6px; }
.url { font: 14.24px/26px "Noto Sans", sans-serif; color: #a6a8ab; flex: 1; }
.url b { font-weight: 400; color: #5d6066; }
.key { width: 14px; height: 9px; margin-right: 11px; }
.star { width: 14px; height: 14px; }
.foot { width: 13px; height: 15px; margin-left: 11px; }
.zoomapp { width: 14px; height: 14px; margin-left: 18px; }
.more { width: 4px; height: 14px; margin-left: 24px; }

.bookmarks { height: 29px; background: #f4f5f8; border-bottom: 1px solid #cfd4dd; display: flex; align-items: center; padding-left: 11px; flex: none; font: 12px/28px "Noto Sans", sans-serif; color: #5b5e64; }
.bm { display: flex; align-items: center; height: 28px; }
.bm-icon { width: 16px; height: 16px; }
.bm-apps { width: 13px; height: 13px; }
.bm-manjaro, .bm-manjaro2 { fill: #35bf5c; }
.bm-drive { height: 14px; }
.bm-title { overflow: hidden; height: 28px; line-height: 27px; flex: none; }
.fade { -webkit-mask-image: linear-gradient(90deg, #000 80%, transparent); mask-image: linear-gradient(90deg, #000 80%, transparent); }
.overflow { margin-left: auto; padding-right: 23px; font-size: 14px; font-weight: 700; line-height: 24px; }

.hue-header { height: 50px; border-top: 2px solid #0b7fad; border-bottom: 1px solid #dcdcdc; display: flex; align-items: center; padding-left: 24px; flex: none; }
.burger { width: 24px; display: flex; flex-direction: column; gap: 5px; margin: 1px 36px 0 0; }
.burger i { height: 3px; background: #0b7fad; }
.logo { width: 97px; height: 25px; margin-right: 78px; fill: #0b7fad; }
.query { width: 115px; height: 32px; background: #0b7fad; color: #fff; border-radius: 3px; display: flex; align-items: center; }
.query span { width: 90px; text-align: center; }
.caret-cell { flex: 1; height: 32px; border-left: 1px solid #3b99bf; display: flex; justify-content: center; align-items: center; padding-right: 1px; }
.caret { border: 4px solid transparent; border-top-color: #fff; border-bottom: 0; }
.gsearch { width: 600px; height: 32px; border: 1px solid #d6d6d6; border-radius: 4px; margin-left: 11px; padding-left: 11.5px; line-height: 30px; color: #999; }
.hue-right { display: flex; align-items: center; margin-left: 74px; font-weight: 700; color: #0b7fad; padding-top: 2px; }
.hue-right span { position: relative; }
.jobs { width: 38px; }
.i-sliders { width: 12px; height: 12px; margin-right: 26px; }
.i-history { width: 12px; height: 12px; margin-right: 26px; }
.i-user { width: 10px; height: 12px; margin-right: 3.5px; }

.hue-body { flex: 1; display: flex; min-height: 0; }
.assist { width: 291px; border-right: 1px solid #dcdcdc; flex: none; }
.assist-tabs { height: 50px; border-bottom: 1px solid #dcdcdc; display: flex; align-items: center; padding: 0 20px 0 16px; color: #a0a0a0; }
.a-db { width: 18px; height: 20px; color: #0b7fad; margin-right: 11px; }
.a-files { width: 21px; height: 20px; margin-right: auto; }
.a-folder { width: 22px; height: 20px; }
.crumb { display: flex; align-items: center; height: 36px; padding-left: 11px; }
.c-chev { width: 10px; height: 15px; margin: 2px 11px 0 0; }
.c-db { width: 13px; height: 14px; margin-right: 3px; }
.tables-head { display: flex; align-items: center; height: 18px; padding: 0 13px 0 13px; color: #737373; }
.count { margin-left: auto; margin-right: 5px; }
.tables-head .ic { color: #a3a3a3; }
.t-filter { width: 12px; height: 12px; margin-right: 5px; }
.t-plus { width: 11px; height: 11px; margin-right: 6px; }
.t-refresh { width: 12px; height: 12px; }
.tables { list-style: none; margin: 7px 0 0; padding: 0 0 0 12px; font-size: 13px; }
.tables li { height: 23px; display: flex; align-items: center; }
.t-table { width: 13px; height: 11px; color: #a8a8a8; margin-right: 5px; }

.main { flex: 1; margin-left: 1px; min-width: 0; }
.sec-bar { height: 50px; background: #f7f7f7; border-bottom: 1px solid #dcdcdc; display: flex; align-items: center; padding-left: 24px; color: #737373; }
.s-lock { width: 13px; height: 16px; margin: 0 5px 3px 0; color: #0b7fad; }
.sec-title { width: 159px; font-size: 20px; color: #0b7fad; padding-bottom: 4px; }
.sec-tab { height: 47px; margin-bottom: 2px; line-height: 46px; padding-left: 24.6px; }
.sec-tab.on { width: 103px; padding-left: 15.6px; background: #f0eeee; color: #424242; }
.sec-tab.acl { padding-left: 40px; }
.sec-body { display: flex; padding-left: 24px; }
.side { width: 142px; color: #0b7fad; }
.side-head { height: 26px; padding: 5px 0 0 15px; font-size: 11px; line-height: 15px; font-weight: 700; color: #999; }
.side-item { height: 38px; display: flex; align-items: center; padding-left: 19px; }
.side-item.sel { background: #0b7fad; color: #fff; padding-left: 18px; }
.p-site { width: 13px; height: 14px; margin-right: 3.5px; }
.p-cubes { width: 18px; height: 14px; margin-right: 3.5px; }
.groups { display: flex; padding-top: 14px; height: 52px; }
.p-group { width: 12px; height: 11px; margin: 2px 3px 0 0; }
.select { width: 112px; height: 28px; margin-left: 15px; border: 1px solid #aaa; border-radius: 4px; background: linear-gradient(#fff 50%, #eee); display: flex; justify-content: flex-end; }
.drop { width: 19px; border-left: 1px solid #aaa; background: linear-gradient(#eee 40%, #ccc); border-radius: 0 3px 3px 0; display: flex; align-items: center; justify-content: center; padding-right: 1px; }
.drop i { border: 3.5px solid transparent; border-top: 6px solid #888; border-bottom: 0; margin-top: 3px; }
.content { flex: 1; padding: 8px 24px 0 25px; }
h1 { font-size: 24px; font-weight: 400; line-height: 32px; margin: 0 0 8px .5px; }
.actions { display: flex; }
.rsearch { width: 296px; height: 32px; border: 1px solid #ccc; border-radius: 4px; padding-left: 12.5px; line-height: 30px; color: #999; margin-right: 21px; box-shadow: inset 0 1px 1px rgba(0, 0, 0, .075); }
.btn { height: 32px; border: 1px solid #c4c4c4; border-radius: 4px; display: flex; align-items: center; justify-content: center; color: #0b7fad; }
.off { color: #bdbdbd; border-color: #e4e4e4; }
.b-exp { width: 88px; margin-right: 3px; }
.b-del { width: 80px; }
.b-add { width: 66px; margin-left: auto; }
.b-i12 { width: 12px; height: 12px; margin-right: 4px; }
.b-i10 { width: 10px; height: 10px; margin: 1px 4px 0 0; }
.row { height: 35px; display: flex; align-items: flex-start; line-height: 16px; padding-left: 1px; }
.row.head { height: 28px; margin-top: 23px; }
.box { width: 17px; height: 17px; border: 1px solid #c0c0c0; margin: 0 4px 0 0; flex: none; }
.head .box { margin-right: 17.4px; }
.head .name { width: 161px; }
.tri { width: 9px; height: 16px; fill: #0b7fad; margin-right: 5px; }
.r-cube { width: 13px; height: 14px; margin: 1px 4.4px 0 0; color: #a0a0a0; }
.row .name { flex: none; }
.row:not(.head) .name { width: 143px; }
.row:not(.head) .name, .row a { margin-top: -1px; }
a { color: #0b7fad; }

.status { position: absolute; left: 0; bottom: 0; width: 438px; height: 23px; border: 1px solid #d9dadc; border-left: 0; border-bottom: 0; border-top-right-radius: 4px; background: #f4f5f8; padding-left: 3px; font: 12px/22px "Noto Sans", sans-serif; color: #65686e; letter-spacing: -.04px; }
</style>
